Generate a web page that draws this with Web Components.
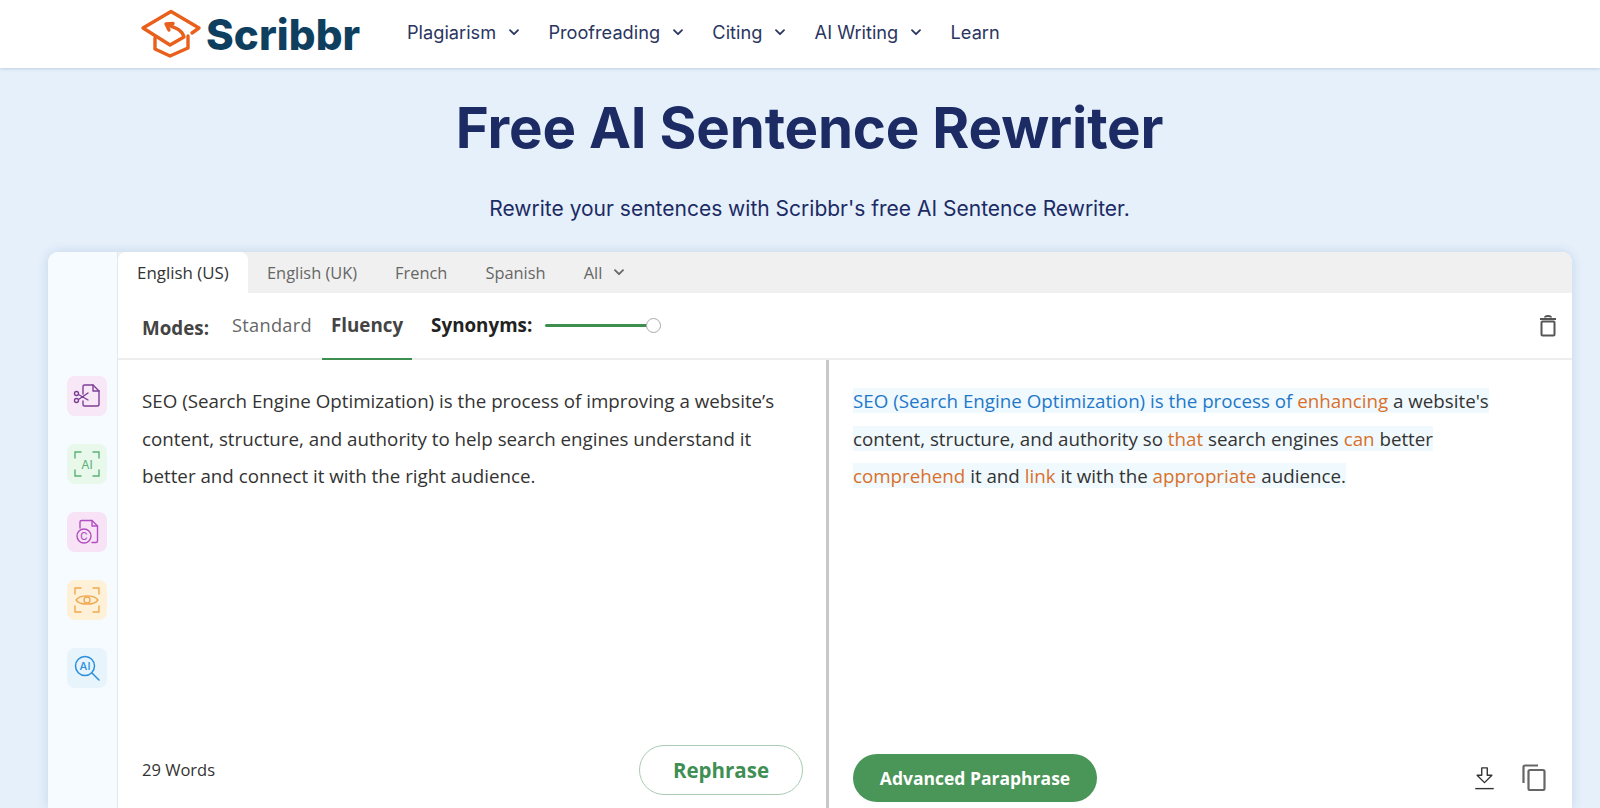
<!DOCTYPE html>
<html lang="en">
<head>
<meta charset="utf-8">
<title>Free AI Sentence Rewriter</title>
<style>
  html, body { margin: 0; height: 808px; overflow: hidden; }
  body { background: #e5f0fb; font-family: "Open Sans", "Liberation Sans", sans-serif; }
</style>
</head>
<body>
<scribbr-header></scribbr-header>
<page-hero heading="Free AI Sentence Rewriter" sub="Rewrite your sentences with Scribbr's free AI Sentence Rewriter."></page-hero>
<rewriter-card></rewriter-card>

<script>
const chevron = `<svg width="10" height="7" viewBox="0 0 10 7" fill="none" stroke="currentColor" stroke-width="1.8" stroke-linecap="round" stroke-linejoin="round"><path d="M1 1.2 5 5.2 9 1.2"/></svg>`;

class NavItem extends HTMLElement {
  constructor() {
    super();
    this.attachShadow({ mode: 'open' });
    const arrow = this.hasAttribute('menu') ? chevron : '';
    this.shadowRoot.innerHTML = `
      <style>
        :host { display: inline-flex; align-items: center; gap: 13px; color: #2a3560; font: 400 18.200px/24px Inter, sans-serif; }
        svg { margin-top: 1px; }
      </style>
      <slot></slot>${arrow}`;
  }
}
customElements.define('nav-item', NavItem);

class ScribbrHeader extends HTMLElement {
  constructor() {
    super();
    this.attachShadow({ mode: 'open' });
    this.shadowRoot.innerHTML = `
      <style>
        :host { display: flex; align-items: center; height: 68px; padding-left: 140px; background: #fff; box-shadow: 0 1px 3px rgba(30,50,90,.18); position: relative; }
        .logo { display: flex; align-items: center; width: 267px; flex: none; }
        .word { font: 800 42px/50px Inter, sans-serif; color: #0f3f5f; letter-spacing: .1px; margin: 2px 0 0 4px; }
        nav { display: flex; gap: 29.300px; margin-top: -4px; }
      </style>
      <div class="logo">
        <svg width="62" height="50" viewBox="140 8 62 50" fill="none" stroke="#e8601c" stroke-width="3.400" stroke-linejoin="round" stroke-linecap="round">
          <path d="M192 32 199 27 171 10.500 143 27 170 44 184 36C182 29 176 27 168 24"/>
          <path d="M166 23 173 22.500M166 23 169 29"/>
          <path d="M155 37V48L170 55 188 47V35"/>
        </svg>
        <span class="word">Scribbr</span>
      </div>
      <nav>
        <nav-item menu>Plagiarism</nav-item>
        <nav-item menu>Proofreading</nav-item>
        <nav-item menu>Citing</nav-item>
        <nav-item menu>AI Writing</nav-item>
        <nav-item>Learn</nav-item>
      </nav>`;
  }
}
customElements.define('scribbr-header', ScribbrHeader);

class PageHero extends HTMLElement {
  constructor() {
    super();
    this.attachShadow({ mode: 'open' });
    this.shadowRoot.innerHTML = `
      <style>
        :host { display: flex; flex-direction: column; align-items: center; height: 184px; padding-left: 19px; color: #1c2b63; }
        h1 { margin: 26px 0 0; font: 700 56.400px/68px Inter, sans-serif; letter-spacing: -.2px; }
        p { margin: 32px 0 0; font: 400 21px/30px Inter, sans-serif; }
      </style>
      <h1>${this.getAttribute('heading')}</h1>
      <p>${this.getAttribute('sub')}</p>`;
  }
}
customElements.define('page-hero', PageHero);

class SideIcon extends HTMLElement {
  constructor() {
    super();
    this.attachShadow({ mode: 'open' });
    this.shadowRoot.innerHTML = `
      <style>
        :host { display: flex; align-items: center; justify-content: center; width: 40px; height: 40px; border-radius: 8px; background: var(--tile); color: var(--ink); }
      </style>
      <slot></slot>`;
  }
}
customElements.define('side-icon', SideIcon);

class ToolSidebar extends HTMLElement {
  constructor() {
    super();
    this.attachShadow({ mode: 'open' });
    this.shadowRoot.innerHTML = `
      <style>
        :host { display: flex; flex-direction: column; align-items: center; gap: 28px; width: 70px; flex: none; box-sizing: border-box; padding: 124px 0 0 9px; background: #f6fbff; border-right: 1px solid #dfe8f3; }
        side-icon svg { display: block; }
        text { font: 500 10px Inter, sans-serif; }
      </style>
      <side-icon style="--tile:#f8e7f6;--ink:#7d3f96">
        <svg width="32" height="32" viewBox="0 0 32 32" fill="none" stroke="currentColor" stroke-width="1.400" stroke-linecap="round" stroke-linejoin="round">
          <path d="M12 21V24.500C12 25.500 12.500 26 13.500 26H26C27 26 28 25.500 28 24.500V11L22 5H13.500C12.500 5 12 5.500 12 6.500V14"/>
          <path d="M22 5V11H28"/>
          <circle cx="5.500" cy="13.500" r="2"/><circle cx="5.500" cy="20.500" r="2"/>
          <path d="M7.500 14.500 17 20M7.500 19.500 17 13"/>
        </svg>
      </side-icon>
      <side-icon style="--tile:#e8f8ea;--ink:#5bb078">
        <svg width="30" height="30" viewBox="0 0 30 30" fill="none" stroke="currentColor" stroke-width="1.400" stroke-linecap="round">
          <path d="M9 3H3V9M21 3H27V9M3 21V27H9M27 21V27H21"/>
          <text x="15" y="19.500" text-anchor="middle" fill="currentColor" stroke="none" style="font-size:12px;font-weight:400">AI</text>
        </svg>
      </side-icon>
      <side-icon style="--tile:#f8e2f6;--ink:#b14fc0">
        <svg width="26" height="28" viewBox="0 0 26 28" fill="none" stroke="currentColor" stroke-width="1.400" stroke-linecap="round" stroke-linejoin="round">
          <path d="M6 10V4C6 3 6.500 2.500 7.500 2.500H18L23.500 8V23C23.500 24 23 24.500 22 24.500H18"/>
          <path d="M18 2.500V8H23.500"/>
          <circle cx="10" cy="18" r="7"/>
          <text x="10" y="21.500" text-anchor="middle" fill="currentColor" stroke="none" style="font-size:10px">C</text>
        </svg>
      </side-icon>
      <side-icon style="--tile:#fff0d8;--ink:#f0a850">
        <svg width="30" height="30" viewBox="0 0 30 30" fill="none" stroke="currentColor" stroke-width="1.400" stroke-linecap="round" stroke-linejoin="round">
          <path d="M9 3H3V9M21 3H27V9M3 21V27H9M27 21V27H21"/>
          <path d="M4 15C8 9.500 22 9.500 26 15 22 20.500 8 20.500 4 15Z"/>
          <circle cx="15" cy="15" r="3"/>
        </svg>
      </side-icon>
      <side-icon style="--tile:#e8f4fc;--ink:#2a8fdc">
        <svg width="30" height="30" viewBox="0 0 30 30" fill="none" stroke="currentColor" stroke-width="1.500" stroke-linecap="round">
          <circle cx="13" cy="13" r="9.500"/>
          <path d="M20 20 27 27"/>
          <text x="13" y="17" text-anchor="middle" fill="currentColor" stroke="none" style="font-size:11px">AI</text>
        </svg>
      </side-icon>`;
  }
}
customElements.define('tool-sidebar', ToolSidebar);

class LangTabs extends HTMLElement {
  constructor() {
    super();
    this.attachShadow({ mode: 'open' });
    this.shadowRoot.innerHTML = `
      <style>
        :host { display: flex; align-items: stretch; height: 41px; background: #f0f0f0; color: #666; font: 400 16.400px/41px "Open Sans", sans-serif; }
        span { padding: 0 19px; display: inline-flex; align-items: center; gap: 12px; }
        .on { background: #fff; color: #333; font-size: 16.900px; border-radius: 8px 8px 0 0; width: 130px; box-sizing: border-box; white-space: nowrap; }
      </style>
      <span class="on">English (US)</span>
      <span>English (UK)</span>
      <span>French</span>
      <span>Spanish</span>
      <span>All ${chevron}</span>`;
  }
}
customElements.define('lang-tabs', LangTabs);

class ModeBar extends HTMLElement {
  constructor() {
    super();
    this.attachShadow({ mode: 'open' });
    this.shadowRoot.innerHTML = `
      <style>
        :host { display: flex; align-items: center; height: 67px; box-sizing: border-box; padding: 0 15px 0 24px; border-bottom: 2px solid #eee; color: #222; font: 400 18.800px/24px "Open Sans", sans-serif; }
        b { font-weight: 700; }
        .label { margin-top: 4px; color: #444; }
        .mode { color: #666; margin: 0 0 2px 23px; font-size: 18.200px; letter-spacing: .3px; }
        .tab { align-self: stretch; display: flex; align-items: center; padding: 0 9px 2px; margin: 0 0 -2px 10px; border-bottom: 2px solid #3d8f50; box-sizing: border-box; color: #444; }
        .syn { margin: 0 0 1px 19px; }
        .track { width: 109px; height: 3px; margin-left: 13px; background: #3d8f50; border-radius: 2px; display: flex; justify-content: flex-end; align-items: center; }
        .knob { width: 13px; height: 13px; margin-right: -7px; border-radius: 50%; background: #fff; border: 1px solid #aaa; flex: none; }
        .trash { margin-left: auto; display: block; }
      </style>
      <b class="label">Modes:</b>
      <span class="mode">Standard</span>
      <span class="tab"><b>Fluency</b></span>
      <b class="syn">Synonyms:</b>
      <span class="track"><span class="knob"></span></span>
      <svg class="trash" width="18" height="22" viewBox="0 0 18 22" fill="none" stroke="#555" stroke-width="2">
        <path d="M1 4H17M6 2.500C6 1.500 7 1 9 1S12 1.500 12 2.500"/>
        <rect x="2.500" y="6.500" width="13" height="14" rx="1"/>
      </svg>`;
  }
}
customElements.define('mode-bar', ModeBar);

class TextPanel extends HTMLElement {
  constructor() {
    super();
    this.attachShadow({ mode: 'open' });
    this.shadowRoot.innerHTML = `
      <style>
        :host { display: flex; flex-direction: column; box-sizing: border-box; padding: 22px var(--side, 24px) var(--foot, 6px) 24px; color: #333; font: 400 18.750px/37.600px "Open Sans", sans-serif; }
        .body { flex: 1; }
        .foot { display: flex; align-items: center; justify-content: space-between; }
      </style>
      <div class="body"><slot></slot></div>
      <div class="foot"><slot name="foot"></slot></div>`;
  }
}
customElements.define('text-panel', TextPanel);

class PillButton extends HTMLElement {
  constructor() {
    super();
    this.attachShadow({ mode: 'open' });
    const solid = this.hasAttribute('solid');
    this.shadowRoot.innerHTML = `
      <style>
        :host { display: inline-flex; align-items: center; justify-content: center; box-sizing: border-box; border-radius: 26px;
          width: ${solid ? 244 : 164}px; height: ${solid ? 48 : 50}px;
          font: 700 ${solid ? 17.500 : 20.500}px/24px "Open Sans", sans-serif;
          background: ${solid ? '#4a9558' : '#fff'}; color: ${solid ? '#fff' : '#3f8f54'};
          border: ${solid ? 'none' : '1px solid #a9cbb3'}; }
      </style>
      <slot></slot>`;
  }
}
customElements.define('pill-button', PillButton);

class RewriterCard extends HTMLElement {
  constructor() {
    super();
    this.attachShadow({ mode: 'open' });
    this.shadowRoot.innerHTML = `
      <style>
        :host { display: flex; width: 1524px; height: 556px; margin-left: 48px; background: #fff; border-radius: 10px 10px 0 0; box-shadow: 0 0 12px rgba(40,70,120,.16); overflow: hidden; }
        .main { flex: 1; display: flex; flex-direction: column; min-width: 0; }
        .panes { flex: 1; display: flex; min-height: 0; }
        .left { width: 711px; flex: none; border-right: 3px solid #c8c8c8; --foot: 13px; --side: 23px; }
        .right { flex: 1; --foot: 6px; }
        .hl { background: #f0f9fe; }
        .blue { color: #1f78c8; }
        .or { color: #d9702a; }
        .words { font-size: 16.500px; line-height: 24px; }
        .tools { display: flex; align-items: center; gap: 27px; margin-right: 2px; padding-bottom: 1px; }
        .tools svg { display: block; }
      </style>
      <tool-sidebar></tool-sidebar>
      <div class="main">
        <lang-tabs></lang-tabs>
        <mode-bar></mode-bar>
        <div class="panes">
          <text-panel class="left">
            SEO (Search Engine Optimization) is the process of improving a website’s content, structure, and authority to help search engines understand it better and connect it with the right audience.
            <span slot="foot" class="words">29 Words</span>
            <pill-button slot="foot">Rephrase</pill-button>
          </text-panel>
          <text-panel class="right">
            <span class="hl blue">SEO (Search Engine Optimization) is the process of </span><span class="hl or">enhancing</span><span class="hl"> a website's </span><span class="hl">content, structure, and authority so </span><span class="hl or">that</span><span class="hl"> search engines </span><span class="hl or">can</span><span class="hl"> better </span><span class="hl or">comprehend</span><span class="hl"> it and </span><span class="hl or">link</span><span class="hl"> it with the </span><span class="hl or">appropriate</span><span class="hl"> audience.</span>
            <pill-button slot="foot" solid>Advanced Paraphrase</pill-button>
            <span slot="foot" class="tools">
              <svg width="21" height="24" viewBox="0 0 22 26" fill="none" stroke="#333" stroke-width="1.500" stroke-linejoin="round">
                <path d="M8 2H14V10H19L11 18 3 10H8Z"/>
                <path d="M1 24.500H21"/>
              </svg>
              <svg width="24" height="27" viewBox="0 0 24 27" fill="none" stroke="#666" stroke-width="2.200" stroke-linejoin="round">
                <path d="M1.500 19V3C1.500 2 2 1.500 3 1.500H16"/>
                <rect x="6.500" y="6" width="16" height="20" rx="1.500"/>
              </svg>
            </span>
          </text-panel>
        </div>
      </div>`;
  }
}
customElements.define('rewriter-card', RewriterCard);
</script>
</body>
</html>
